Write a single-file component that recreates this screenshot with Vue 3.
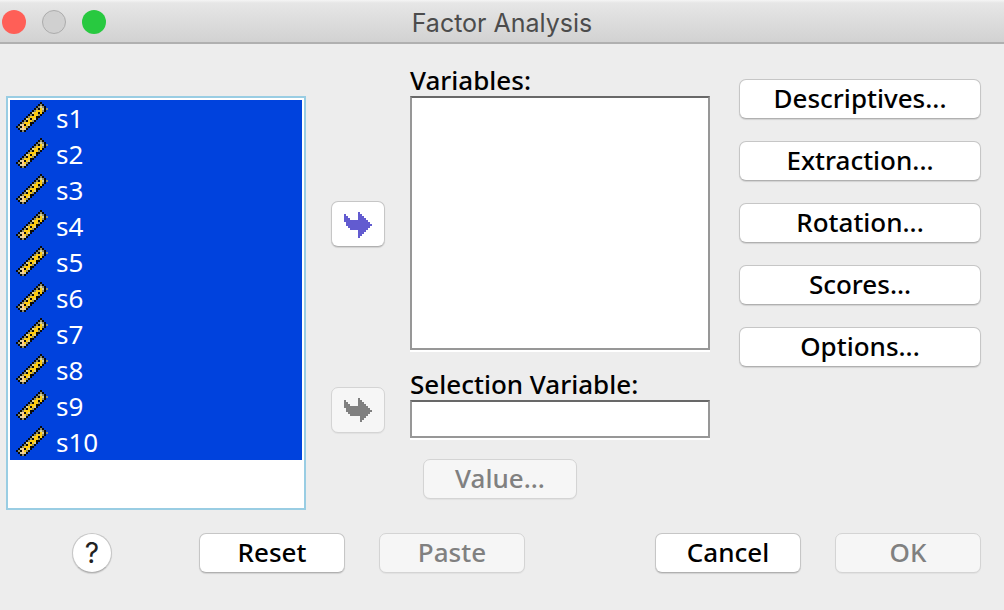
<script setup>
import { ref } from 'vue'

const variables = ['s1', 's2', 's3', 's4', 's5', 's6', 's7', 's8', 's9', 's10']
const selected = ref([...variables])
const selectionVariable = ref('')
const dialogs = ['Descriptives...', 'Extraction...', 'Rotation...', 'Scores...', 'Options...']

const palette = { K: '#0a0a0a', g: '#8d8d6c', l: '#d4cf9a', y: '#ffcc10', p: '#ffcf8a' }
const ruler = [
  '............K...',
  '...........KgK..',
  '..........KglgK.',
  '.........KgKylKg',
  '........KgyyygK.',
  '.......KlyyKyK..',
  '......KgKyygK...',
  '.....KgyyyKK....',
  '....KlyKylK.....',
  '...KgKyygK......',
  '..KgyyyKK.......',
  '.KlpKylK........',
  'KgKpygK.........',
  '.KlplK..........',
  '..KgK...........'
]
const pixels = ruler.flatMap((row, y) =>
  [...row].map((c, x) => ({ x, y, fill: palette[c] })).filter((p) => p.fill)
)
</script>

<template>
  <main class="dialog">
    <header class="titlebar">
      <div class="lights">
        <button class="light close" aria-label="Close"></button>
        <button class="light minimise" aria-label="Minimise" disabled></button>
        <button class="light zoom" aria-label="Zoom"></button>
      </div>
      <h1>Factor Analysis</h1>
    </header>

    <div class="content">
      <ul class="source" role="listbox" aria-label="Available variables" aria-multiselectable="true">
        <li v-for="name in variables" :key="name" role="option" :aria-selected="selected.includes(name)" :class="{ selected: selected.includes(name) }">
          <svg class="ruler" viewBox="0 0 16 15" shape-rendering="crispEdges" aria-hidden="true">
            <rect v-for="p in pixels" :key="p.x + '-' + p.y" :x="p.x" :y="p.y" width="1" height="1" :fill="p.fill" />
          </svg>
          <span>{{ name }}</span>
        </li>
      </ul>

      <div class="movers">
        <button class="btn move" aria-label="Move to Variables">
          <svg viewBox="0 0 14 13" shape-rendering="crispEdges" aria-hidden="true">
            <path d="M0 1h1v1h1v1h1v1h4V0h1v1h1v1h1v1h1v1h1v1h1v1h1v1h-1v1h-1v1h-1v1h-1v1h-1v1h-1v1H7V9H3V8H2V7H1V5H0z" />
          </svg>
        </button>
        <button class="btn move" aria-label="Move to Selection Variable" disabled>
          <svg viewBox="0 0 14 13" shape-rendering="crispEdges" aria-hidden="true">
            <path d="M0 1h1v1h1v1h1v1h4V0h1v1h1v1h1v1h1v1h1v1h1v1h1v1h-1v1h-1v1h-1v1h-1v1h-1v1H8V9H3V8H2V7H1V5H0z" />
          </svg>
        </button>
      </div>

      <div class="targets">
        <span id="variables-label" class="label">Variables:</span>
        <ul class="field variables" role="listbox" aria-labelledby="variables-label"></ul>
        <label class="label second" for="selection">Selection Variable:</label>
        <input id="selection" v-model="selectionVariable" class="field selection" type="text" readonly />
        <button class="btn value" disabled>Value...</button>
      </div>

      <nav class="options" aria-label="Analysis settings">
        <button v-for="d in dialogs" :key="d" class="btn">{{ d }}</button>
      </nav>
    </div>

    <footer class="actions">
      <button class="help" aria-label="Help">?</button>
      <button class="btn">Reset</button>
      <button class="btn" disabled>Paste</button>
      <button class="btn cancel">Cancel</button>
      <button class="btn" disabled>OK</button>
    </footer>
  </main>
</template>

<style>
body {
  margin: 0;
  background: #ededed;
}
</style>

<style scoped>
.dialog {
  min-height: 100vh;
  background: #ededed;
  color: #000;
  font: 500 26px/32px "Noto Sans", "Open Sans", sans-serif;
}
.titlebar {
  display: grid;
  grid-template-columns: 1fr auto 1fr;
  align-items: center;
  height: 44px;
  box-sizing: border-box;
  padding-top: 2px;
  border-bottom: 2px solid #b0b0b0;
  background: linear-gradient(#f5f5f5, #e6e6e6 3px, #d2d2d2);
}
.lights {
  display: flex;
  gap: 16px;
  padding-left: 2px;
}
.light {
  width: 24px;
  height: 24px;
  padding: 0;
  border: 0;
  border-radius: 50%;
}
.close { background: #ff5f57; }
.minimise { background: #d0d0d0; border: 1px solid #acacac; }
.zoom { background: #28c940; }
h1 {
  margin: 0;
  padding-top: 2px;
  color: #4c4c4c;
  font: 400 25px/32px Inter, Roboto, sans-serif;
}
.content {
  display: grid;
  grid-template-columns: minmax(0, 1fr) 54px minmax(0, 1fr) 246px;
  column-gap: 25px;
  padding: 20px 23px 0 6px;
}
.source {
  margin: 32px 0 0;
  padding: 2px 2px 48px;
  border: 2px solid #99cde3;
  background: #fff;
  list-style: none;
}
.source li {
  display: flex;
  align-items: center;
  gap: 8px;
  height: 36px;
  padding-left: 6px;
  font-size: 26px;
  font-weight: 400;
}
.source li.selected {
  background: #0042dd;
  color: #fff;
}
.ruler {
  align-self: flex-start;
  width: 32px;
  height: 30px;
  margin-top: 2px;
}
.btn {
  box-sizing: border-box;
  height: 40px;
  padding: 0 0 2px;
  border: 1px solid #c6c6c6;
  border-bottom-color: #b0b0b0;
  border-radius: 7px;
  background: #fff;
  box-shadow: 0 1px 1px #0000001f;
  color: #000;
  font: inherit;
}
.btn:disabled {
  border-color: #d4d4d4;
  background: #f6f6f6;
  box-shadow: 0 1px 1px #0000000d;
  color: #808080;
}
.movers {
  display: flex;
  flex-direction: column;
  gap: 140px;
  padding-top: 137px;
}
.move {
  display: grid;
  place-items: center;
  height: 46px;
  padding: 2px 0 0;
}
.move svg {
  width: 28px;
  height: 26px;
  fill: #625bd0;
}
.move:disabled svg { fill: #808080; }
.targets {
  display: flex;
  flex-direction: column;
}
.label {
  height: 32px;
}
.second { margin-top: 18px; }
.field {
  box-sizing: border-box;
  width: 100%;
  margin: 0;
  padding: 0 4px;
  border: 2px solid #979797;
  border-top-color: #686868;
  border-radius: 0;
  background: #fff;
  box-shadow: 0 2px #fff;
  font: inherit;
  outline: 0;
}
.variables { height: 254px; }
.selection { height: 38px; }
.value {
  width: 154px;
  margin: 21px 0 0 13px;
}
.options {
  display: flex;
  flex-direction: column;
  gap: 22px;
  padding: 15px 0 0 4px;
}
.actions {
  display: flex;
  align-items: center;
  gap: 34px;
  padding: 23px 23px 36px 72px;
}
.actions .btn { width: 146px; }
.help {
  width: 40px;
  height: 40px;
  margin-right: 53px;
  padding: 0;
  border: 1px solid #c6c6c6;
  border-bottom-color: #b0b0b0;
  border-radius: 50%;
  background: #fff;
  box-shadow: 0 1px 1px #0000001f;
  color: #222;
  font: 400 28px/36px Inter, sans-serif;
}
.actions .cancel { margin-left: auto; }
</style>
